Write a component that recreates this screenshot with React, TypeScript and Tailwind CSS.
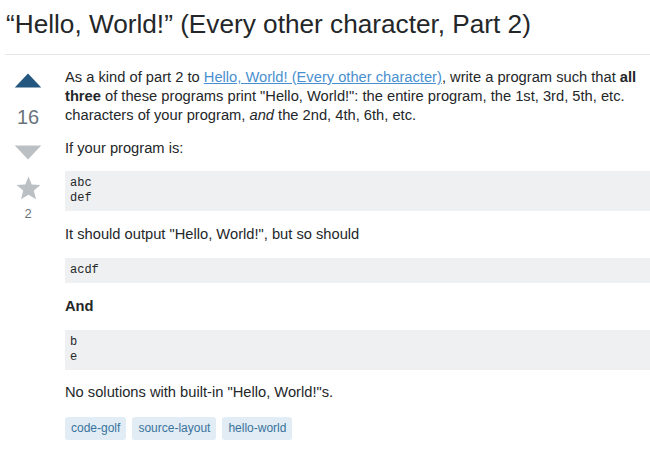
import React from 'react'

const code = "block bg-[#eff0f1] px-[5px] py-[5px] text-[12px] leading-[15px] text-[#242729] font-['Liberation_Mono',monospace] whitespace-pre";

// vote column on the left
const Votes = () => (
    <div className="w-[56px] flex flex-col items-center shrink-0 pt-[5px]">
        <svg width="28" height="15" viewBox="0 0 36 18"><path d="M1 18h34L18 0z" fill="#24577f" /></svg>
        <div className="text-[20px] leading-[26px] text-[#6a737c] mt-[16px] mb-[15px]">16</div>
        <svg width="28" height="15" viewBox="0 0 36 18"><path d="M1 0h34L18 18z" fill="#bbc0c4" /></svg>
        <svg className="mt-[16px]" width="25" height="25" viewBox="0 0 24 24"><path d="M12 0.5l3.1 7.6 8.4.6-6.4 5.3 2.1 8.4L12 17.9 4.8 22.4l2.1-8.4L.5 8.7l8.4-.6z" fill="#bbc0c4" /></svg>
        <div className="text-[13px] leading-[17px] text-[#6a737c] mt-[4px]">2</div>
    </div>
)

const App = () => {
    return (
        <div className="w-[650px] h-[458px] overflow-hidden bg-white font-['Liberation_Sans',Arial,sans-serif] text-[#242729]">
            <div className="pl-[5px]">
                <h1 className="text-[26.2px] leading-[30px] pl-[1px] pt-[9px] pb-[15px] border-b border-[#e4e6e8] font-normal">
                    “Hello, World!” (Every other character, Part 2)
                </h1>
            </div>
            <div className="flex pt-[13px]">
                <Votes />
                <div className="ml-[9px] flex-1 text-[14.7px] leading-[19px] flex flex-col gap-[13px]">
                    <p className="mb-[1px]">
                        As a kind of part 2 to <a className="text-[#4a90d0] underline">Hello, World! (Every other character)</a>, write a program such that <b>all three</b> of these programs print "Hello, World!": the entire program, the 1st, 3rd, 5th, etc. characters of your program, <i>and</i> the 2nd, 4th, 6th, etc.
                    </p>
                    <p>If your program is:</p>
                    <code className={code}>{"abc\ndef"}</code>
                    <p className="mt-[1px] mb-[1px]">It should output "Hello, World!", but so should</p>
                    <code className={code + " py-[4.5px]"}>acdf</code>
                    <p className="mt-[1px] mb-[1px] font-bold">And</p>
                    <code className={code}>{"b\ne"}</code>
                    <p className="mb-[2px]">No solutions with built-in "Hello, World!"s.</p>
                    <div className="flex gap-[6px] text-[12px]">
                        {["code-golf", "source-layout", "hello-world"].map(t => (
                            <span key={t} className="bg-[#e1ecf4] text-[#39739d] px-[6px] py-[4px] leading-[15px] rounded-[3px]">{t}</span>
                        ))}
                    </div>
                </div>
            </div>
        </div>
    )
}

export default App
